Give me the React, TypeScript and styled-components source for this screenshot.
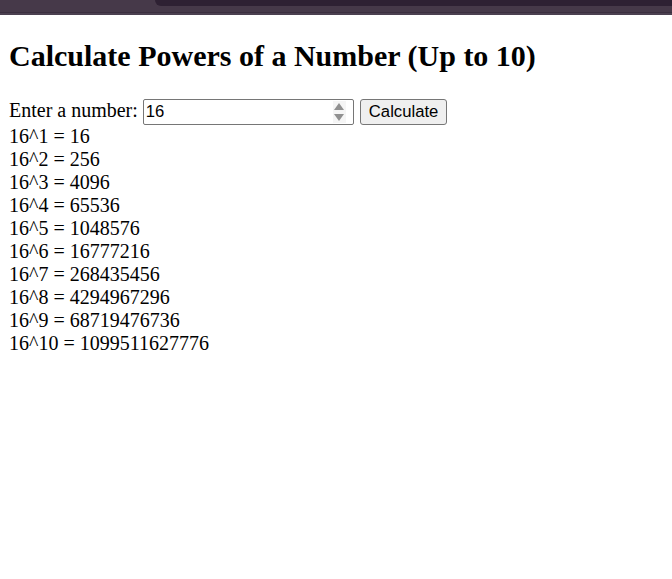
import React, { useState } from "react"
import styled, { createGlobalStyle } from "styled-components"

const GlobalStyle = createGlobalStyle`
    html, body {
        margin: 0;
        padding: 0;
        background: #ffffff;
    }
    body {
        font-family: 'Liberation Serif', 'Times New Roman', serif;
        font-size: 20px;
        color: #000000;
    }
`

const WindowEdge = styled.div`
    height: 15px;
    background: linear-gradient(to bottom, #463949 0, #463949 12px, #3b2f3f 12px, #3b2f3f 13px, #4b4050 13px);
    display: flex;
    justify-content: flex-end;
`

const ActiveTab = styled.div`
    width: calc(100% - 155px);
    height: 6px;
    background: #2e2133;
    border-bottom-left-radius: 9px;
`

const Page = styled.main`
    padding: 0 9px;
`

const Title = styled.h1`
    font-size: 30px;
    font-weight: bold;
    margin: 24px 0 26px;
`

const Form = styled.div`
    line-height: normal;
`

const NumberBox = styled.span`
    display: inline-flex;
    align-items: stretch;
    width: 211px;
    height: 26px;
    box-sizing: border-box;
    border: 1px solid #767676;
    border-radius: 2px;
    vertical-align: baseline;
    background: #fff;
`

const NumberInput = styled.input`
    flex: 1;
    min-width: 0;
    border: none;
    outline: none;
    padding: 1px 2px;
    font-family: 'Liberation Sans', Arial, sans-serif;
    font-size: 16.67px;
    background: transparent;
    color: #000;
`

const Spinner = styled.span`
    width: 13px;
    margin: 1px 7px 1px 0;
    background: #f5f5f5;
    display: flex;
    flex-direction: column;
    justify-content: center;
    align-items: center;
    gap: 2px;
`

const Button = styled.button`
    font-family: 'Liberation Sans', Arial, sans-serif;
    font-size: 16.67px;
    height: 26px;
    padding: 1px 8px;
    margin: 0 0 0 1px;
    background: #efefef;
    border: 1px solid #767676;
    border-radius: 3px;
    color: #000;
`

const Results = styled.div``

const ResultRow = styled.div`
    line-height: 23px;
`

export default function App() {
    const [value, setValue] = useState("16")
    const [base, setBase] = useState(16)

    const rows = Array.from({ length: 10 }, (_, i) => {
        const p = i + 1
        return `${base}^${p} = ${Math.pow(base, p)}`
    })

    return <>
        <GlobalStyle />
        <WindowEdge><ActiveTab /></WindowEdge>
        <Page>
            <Title>Calculate Powers of a Number (Up to 10)</Title>
            <Form>
                Enter a number:
                {" "}
                <NumberBox>
                    <NumberInput value={value} onChange={e => setValue(e.target.value)} />
                    <Spinner>
                        <svg width="10" height="8" viewBox="0 0 10 8"><path d="M5 0 L10 7 L0 7 Z" fill="#909090" /></svg>
                        <svg width="10" height="8" viewBox="0 0 10 8"><path d="M0 1 L10 1 L5 8 Z" fill="#909090" /></svg>
                    </Spinner>
                </NumberBox>
                {" "}
                <Button onClick={() => setBase(Number(value) || 0)}>Calculate</Button>
            </Form>
            <Results>
                {rows.map((r, i) => <ResultRow key={i}>{r}</ResultRow>)}
            </Results>
        </Page>
    </>
}
